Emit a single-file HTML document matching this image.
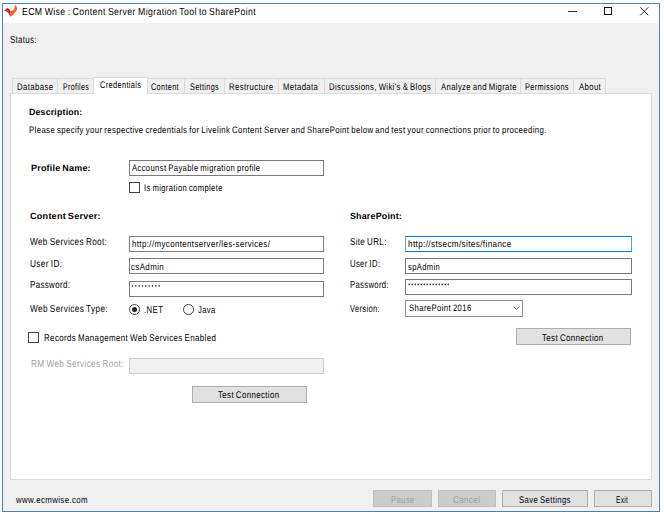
<!DOCTYPE html>
<html><head><meta charset="utf-8">
<style>
*{margin:0;padding:0;box-sizing:border-box}
html,body{width:664px;height:516px;background:#fff;overflow:hidden}
body{position:relative;font-family:"Liberation Sans",sans-serif;color:#000}
.a{position:absolute}
.t{position:absolute;white-space:nowrap;line-height:0;text-rendering:geometricPrecision;transform-origin:0 0;z-index:10}
#win{position:absolute;left:2px;top:3px;width:658px;height:509px;border:1px solid #4a7fc2;background:#f0f0f0}
#title{position:absolute;left:3px;top:4px;width:656px;height:19px;background:#fff}
.tab{position:absolute;top:78px;height:16px;border:1px solid #dadada;border-bottom:none;background:#f0f0f0}
.tab.sel{top:77px;height:17px;background:#fff;z-index:3;border-color:#dadada}
#panel{position:absolute;left:10px;top:93px;width:642px;height:387px;background:#fff;border:1px solid #dadada}
.tb{position:absolute;height:16px;border:1px solid #7a7a7a;background:#fff}
.btn{position:absolute;height:17px;border:1px solid #adadad;background:#e1e1e1}
.btn.dis{border-color:#bfbfbf;background:#cccccc}
.chk{position:absolute;width:11px;height:11px;border:1px solid #444;background:#fff}
.rad{position:absolute;width:11px;height:11px;border:1px solid #444;border-radius:50%;background:#fff}
.dots{position:absolute;height:2px;background-image:radial-gradient(circle,#222 0.7px,transparent 0.9px);background-size:3px 2px}
</style></head><body>
<div id="win"></div>
<div id="title"></div>
<svg class="a" style="left:0;top:0" width="20" height="20" viewBox="0 0 20 20">
 <path d="M4 10.4 L5.6 9.4 L7.2 8 L8.4 8.6 L9.6 9.5 L10.6 11.2 L10.6 16.4 L10.3 16.6 L9.5 14.9 L8.8 13.6 L7.2 11.8 L5.5 11 Z" fill="#e11a28"/>
 <path d="M10.4 11.2 L12 10.8 L13.5 10 L14.5 8.2 L14.8 5.8 L15.4 5 L16.3 6 L17 8.2 L16.8 10.3 L15.3 12.1 L13.2 14.4 L11.4 15.9 L10.5 16.9 L10.2 15.5 Z" fill="#ee6420"/>
</svg>
<!-- window buttons -->
<div class="a" style="left:568px;top:11px;width:9px;height:1px;background:#333"></div>
<div class="a" style="left:604px;top:7px;width:8px;height:8px;border:1px solid #111"></div>
<svg class="a" style="left:639px;top:6px" width="11" height="11" viewBox="0 0 11 11"><path d="M1.3 1.3 L9.3 9.3 M9.3 1.3 L1.3 9.3" stroke="#222" stroke-width="0.95"/></svg>

<!-- tabs -->
<div class="tab" style="left:12px;width:46px"></div>
<div class="tab" style="left:57px;width:37px"></div>
<div class="tab" style="left:147px;width:38px"></div>
<div class="tab" style="left:184px;width:41px"></div>
<div class="tab" style="left:224px;width:55px"></div>
<div class="tab" style="left:278px;width:47px"></div>
<div class="tab" style="left:324px;width:112px"></div>
<div class="tab" style="left:435px;width:86px"></div>
<div class="tab" style="left:520px;width:54px"></div>
<div class="tab" style="left:573px;width:33px"></div>
<div id="panel"></div>
<div class="tab sel" style="left:93px;width:55px"></div>

<div class="tb" style="left:129px;top:160px;width:195px"></div>
<div class="chk" style="left:129px;top:182px"></div>

<div class="tb" style="left:129px;top:236px;width:195px"></div>
<div class="tb" style="left:129px;top:258px;width:195px"></div>
<div class="tb" style="left:129px;top:281px;width:195px"></div>

<div class="rad" style="left:129px;top:304px"></div>
<div class="a" style="left:131.8px;top:306.8px;width:5.4px;height:5.4px;border-radius:50%;background:#222"></div>
<div class="rad" style="left:183px;top:304px"></div>

<div class="chk" style="left:28px;top:332px"></div>
<div class="tb" style="left:129px;top:358px;width:195px;border-color:#cccccc;background:#f0f0f0"></div>
<div class="btn" style="left:192px;top:386px;width:115px"></div>

<div class="tb" style="left:405px;top:236px;width:227px;border-color:#0078d7;border-right-color:#5aa2e6;border-left-color:#5aa2e6"></div>
<div class="tb" style="left:405px;top:258px;width:227px"></div>
<div class="tb" style="left:405px;top:279px;width:227px"></div>
<svg class="a" style="left:0;top:0;z-index:5" width="664" height="516" fill="#333"><circle cx="132.45" cy="285.9" r="0.8"/><circle cx="135.79" cy="285.9" r="0.8"/><circle cx="139.13" cy="285.9" r="0.8"/><circle cx="142.47" cy="285.9" r="0.8"/><circle cx="145.81" cy="285.9" r="0.8"/><circle cx="149.15" cy="285.9" r="0.8"/><circle cx="152.49" cy="285.9" r="0.8"/><circle cx="155.83" cy="285.9" r="0.8"/><circle cx="159.17" cy="285.9" r="0.8"/><circle cx="409.25" cy="284.4" r="0.8"/><circle cx="412.25" cy="284.4" r="0.8"/><circle cx="415.25" cy="284.4" r="0.8"/><circle cx="418.25" cy="284.4" r="0.8"/><circle cx="421.25" cy="284.4" r="0.8"/><circle cx="424.25" cy="284.4" r="0.8"/><circle cx="427.25" cy="284.4" r="0.8"/><circle cx="430.25" cy="284.4" r="0.8"/><circle cx="433.25" cy="284.4" r="0.8"/><circle cx="436.25" cy="284.4" r="0.8"/><circle cx="439.25" cy="284.4" r="0.8"/><circle cx="442.25" cy="284.4" r="0.8"/><circle cx="445.25" cy="284.4" r="0.8"/><circle cx="448.25" cy="284.4" r="0.8"/></svg>
<div class="a" style="left:405px;top:300px;width:118px;height:17px;border:1px solid #8f8f8f;background:#fff"></div>
<svg class="a" style="left:512px;top:305px" width="9" height="6" viewBox="0 0 9 6"><path d="M1.5 1.5 L4.5 4.5 L7.5 1.5" stroke="#444" stroke-width="0.9" fill="none"/></svg>
<div class="btn" style="left:516px;top:328px;width:115px"></div>

<div class="btn dis" style="left:373px;top:490px;width:59px"></div>
<div class="btn dis" style="left:438px;top:490px;width:58px"></div>
<div class="btn" style="left:502px;top:490px;width:86px"></div>
<div class="btn" style="left:594px;top:490px;width:58px"></div>

<div class="t" style="left:21.80px;top:12.90px;font-size:10.2px;transform:scaleX(0.8551);letter-spacing:0.45px;word-spacing:-0.8px;">ECM Wise : Content Server Migration Tool to SharePoint</div>
<div class="t" style="left:10.20px;top:40.80px;font-size:10.2px;transform:scaleX(0.7713);letter-spacing:0.45px;word-spacing:-0.8px;">Status:</div>
<div class="t" style="left:17.20px;top:87.90px;font-size:9.6px;transform:scaleX(0.8158);letter-spacing:0.45px;word-spacing:-0.8px;">Database</div>
<div class="t" style="left:63.30px;top:87.90px;font-size:9.6px;transform:scaleX(0.7328);letter-spacing:0.45px;word-spacing:-0.8px;">Profiles</div>
<div class="t" style="left:99.50px;top:85.90px;font-size:9.6px;transform:scaleX(0.7721);letter-spacing:0.45px;word-spacing:-0.8px;">Credentials</div>
<div class="t" style="left:151.20px;top:87.90px;font-size:9.6px;transform:scaleX(0.7588);letter-spacing:0.45px;word-spacing:-0.8px;">Content</div>
<div class="t" style="left:190.20px;top:87.90px;font-size:9.6px;transform:scaleX(0.7575);letter-spacing:0.45px;word-spacing:-0.8px;">Settings</div>
<div class="t" style="left:229.30px;top:87.90px;font-size:9.6px;transform:scaleX(0.8130);letter-spacing:0.45px;word-spacing:-0.8px;">Restructure</div>
<div class="t" style="left:283.00px;top:87.90px;font-size:9.6px;transform:scaleX(0.8057);letter-spacing:0.45px;word-spacing:-0.8px;">Metadata</div>
<div class="t" style="left:329.30px;top:87.90px;font-size:9.6px;transform:scaleX(0.8064);letter-spacing:0.45px;word-spacing:-0.8px;">Discussions, Wiki's &amp; Blogs</div>
<div class="t" style="left:440.50px;top:87.90px;font-size:9.6px;transform:scaleX(0.8043);letter-spacing:0.45px;word-spacing:-0.8px;">Analyze and Migrate</div>
<div class="t" style="left:525.40px;top:87.90px;font-size:9.6px;transform:scaleX(0.7674);letter-spacing:0.45px;word-spacing:-0.8px;">Permissions</div>
<div class="t" style="left:578.70px;top:87.90px;font-size:9.6px;transform:scaleX(0.8087);letter-spacing:0.45px;word-spacing:-0.8px;">About</div>
<div class="t" style="left:28.70px;top:111.80px;font-size:9.0px;transform:scaleX(0.9742);letter-spacing:0.2px;word-spacing:-0.8px;font-weight:bold;">Description:</div>
<div class="t" style="left:28.60px;top:130.00px;font-size:9.4px;transform:scaleX(0.8318);letter-spacing:0.45px;word-spacing:-0.8px;">Please specify your respective credentials for Livelink Content Server and SharePoint below and test your connections prior to proceeding.</div>
<div class="t" style="left:30.80px;top:168.20px;font-size:9.0px;transform:scaleX(0.9997);letter-spacing:0.2px;word-spacing:-0.8px;font-weight:bold;">Profile Name:</div>
<div class="t" style="left:131.90px;top:167.90px;font-size:9.4px;transform:scaleX(0.8168);letter-spacing:0.45px;word-spacing:-0.8px;">Accounst Payable migration profile</div>
<div class="t" style="left:144.10px;top:188.80px;font-size:9.7px;transform:scaleX(0.7882);letter-spacing:0.45px;word-spacing:-0.8px;">Is migration complete</div>
<div class="t" style="left:30.10px;top:215.80px;font-size:9.0px;transform:scaleX(1.0156);letter-spacing:0.2px;word-spacing:-0.8px;font-weight:bold;">Content Server:</div>
<div class="t" style="left:30.10px;top:242.90px;font-size:10.2px;transform:scaleX(0.8016);letter-spacing:0.45px;word-spacing:-0.8px;">Web Services Root:</div>
<div class="t" style="left:131.60px;top:244.30px;font-size:9.4px;transform:scaleX(0.8448);letter-spacing:0.45px;word-spacing:-0.8px;">http://mycontentserver/les-services/</div>
<div class="t" style="left:30.10px;top:265.10px;font-size:10.2px;transform:scaleX(0.8051);letter-spacing:0.45px;word-spacing:-0.8px;">User ID:</div>
<div class="t" style="left:130.90px;top:266.80px;font-size:9.4px;transform:scaleX(0.8456);letter-spacing:0.45px;word-spacing:-0.8px;">csAdmin</div>
<div class="t" style="left:30.10px;top:286.30px;font-size:10.2px;transform:scaleX(0.7809);letter-spacing:0.45px;word-spacing:-0.8px;">Password:</div>
<div class="t" style="left:30.10px;top:310.40px;font-size:10.2px;transform:scaleX(0.8063);letter-spacing:0.45px;word-spacing:-0.8px;">Web Services Type:</div>
<div class="t" style="left:144.40px;top:311.10px;font-size:9.7px;transform:scaleX(0.8085);letter-spacing:0.45px;word-spacing:-0.8px;">.NET</div>
<div class="t" style="left:198.10px;top:311.10px;font-size:9.7px;transform:scaleX(0.7893);letter-spacing:0.45px;word-spacing:-0.8px;">Java</div>
<div class="t" style="left:43.70px;top:338.80px;font-size:9.7px;transform:scaleX(0.8197);letter-spacing:0.45px;word-spacing:-0.8px;">Records Management Web Services Enabled</div>
<div class="t" style="left:31.00px;top:364.80px;font-size:10.2px;transform:scaleX(0.8033);letter-spacing:0.45px;word-spacing:-0.8px;color:#a0a0a0;">RM Web Services Root:</div>
<div class="t" style="left:218.00px;top:395.90px;font-size:9.7px;transform:scaleX(0.8152);letter-spacing:0.45px;word-spacing:-0.8px;">Test Connection</div>
<div class="t" style="left:349.60px;top:215.80px;font-size:9.0px;transform:scaleX(0.9865);letter-spacing:0.2px;word-spacing:-0.8px;font-weight:bold;">SharePoint:</div>
<div class="t" style="left:349.60px;top:243.20px;font-size:10.2px;transform:scaleX(0.7835);letter-spacing:0.45px;word-spacing:-0.8px;">Site URL:</div>
<div class="t" style="left:407.90px;top:244.30px;font-size:9.4px;transform:scaleX(0.8639);letter-spacing:0.45px;word-spacing:-0.8px;">http://stsecm/sites/finance</div>
<div class="t" style="left:349.60px;top:265.20px;font-size:10.2px;transform:scaleX(0.7562);letter-spacing:0.45px;word-spacing:-0.8px;">User ID:</div>
<div class="t" style="left:407.80px;top:266.80px;font-size:9.4px;transform:scaleX(0.8085);letter-spacing:0.45px;word-spacing:-0.8px;">spAdmin</div>
<div class="t" style="left:349.60px;top:286.30px;font-size:10.2px;transform:scaleX(0.7530);letter-spacing:0.45px;word-spacing:-0.8px;">Password:</div>
<div class="t" style="left:349.60px;top:310.00px;font-size:10.2px;transform:scaleX(0.7411);letter-spacing:0.45px;word-spacing:-0.8px;">Version:</div>
<div class="t" style="left:408.50px;top:308.20px;font-size:9.4px;transform:scaleX(0.8265);letter-spacing:0.45px;word-spacing:-0.8px;">SharePoint 2016</div>
<div class="t" style="left:542.20px;top:338.80px;font-size:9.7px;transform:scaleX(0.8166);letter-spacing:0.45px;word-spacing:-0.8px;">Test Connection</div>
<div class="t" style="left:15.64px;top:499.90px;font-size:9.4px;transform:scaleX(0.8365);letter-spacing:0.45px;word-spacing:-0.8px;">www.ecmwise.com</div>
<div class="t" style="left:390.60px;top:500.50px;font-size:9.7px;transform:scaleX(0.7929);letter-spacing:0.45px;word-spacing:-0.8px;color:#a0a0a0;">Pause</div>
<div class="t" style="left:452.50px;top:500.50px;font-size:9.7px;transform:scaleX(0.8309);letter-spacing:0.45px;word-spacing:-0.8px;color:#a0a0a0;">Cancel</div>
<div class="t" style="left:518.80px;top:500.50px;font-size:9.7px;transform:scaleX(0.7996);letter-spacing:0.45px;word-spacing:-0.8px;">Save Settings</div>
<div class="t" style="left:616.10px;top:500.50px;font-size:9.7px;transform:scaleX(0.6795);letter-spacing:0.45px;word-spacing:-0.8px;">Exit</div>
</body></html>
